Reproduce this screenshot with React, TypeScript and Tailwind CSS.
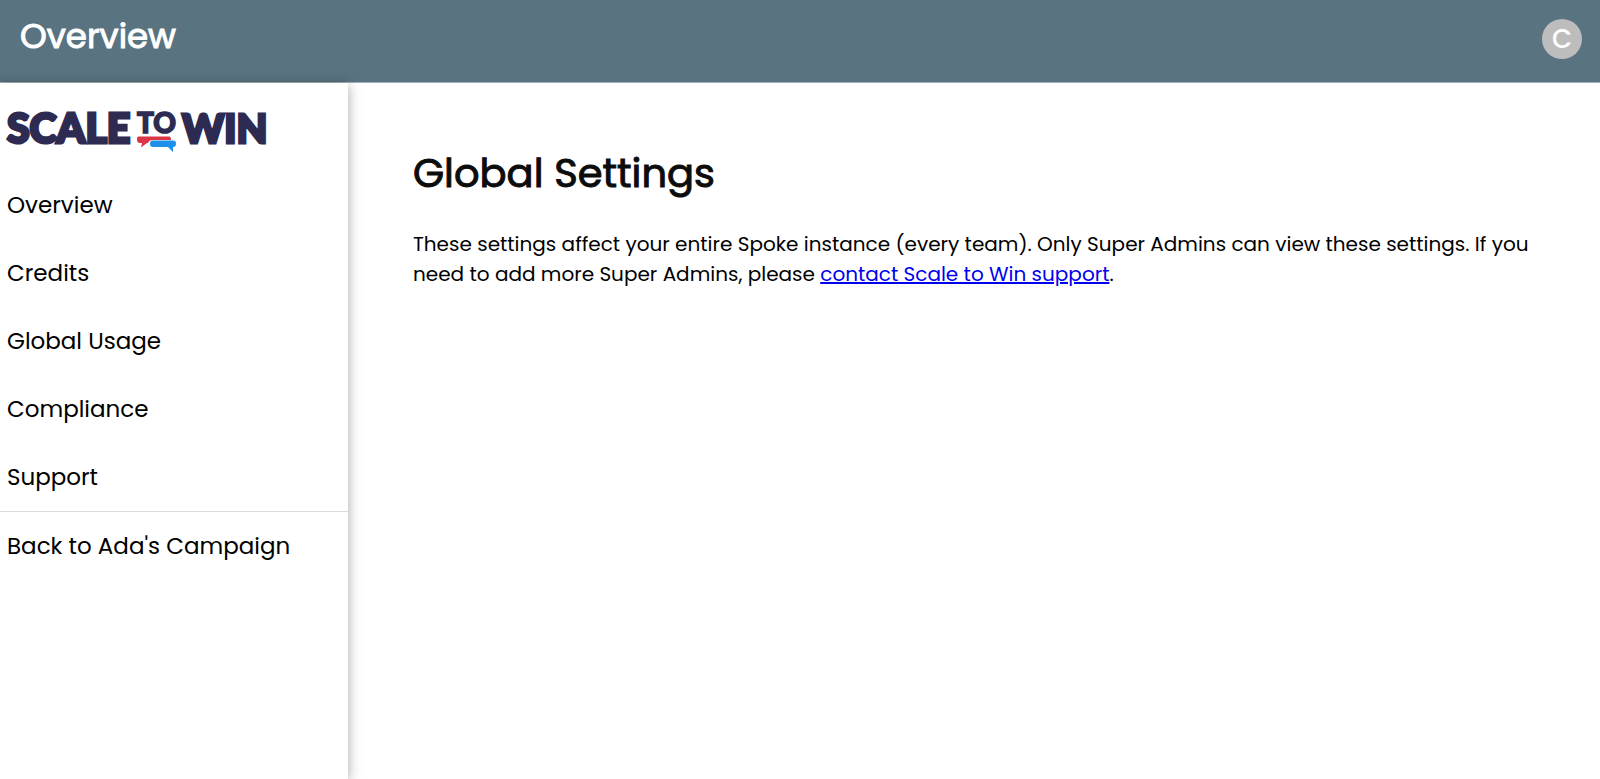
const navItems = [
  { id: 'overview', label: 'Overview' },
  { id: 'credits', label: 'Credits' },
  { id: 'usage', label: 'Global Usage' },
  { id: 'compliance', label: 'Compliance' },
  { id: 'support', label: 'Support' },
]

const navLink = 'flex h-[68px] items-center px-[7px] text-[23px] text-black hover:bg-gray-100'

const Logo = () => (
  <svg
    width="264"
    height="56"
    viewBox="0 0 264 56"
    role="img"
    aria-label="Scale to Win"
    fontFamily="Lato, sans-serif"
    fontWeight="900"
    fill="#2d2b52"
    stroke="#2d2b52"
  >
    <text x="1" y="44" fontSize="41" strokeWidth="3">SCALE</text>
    <text x="131" y="34" fontSize="28" strokeWidth="1.5">TO</text>
    <text x="176" y="44" fontSize="40" strokeWidth="3">WIN</text>
    <path
      d="M133 37.500h30q2 0 2 3.500h-18q-4 0-5 3h-1l-6 4.500 1-4.500h-2q-3 0-3-3.500t2-3z"
      fill="#dc3545"
      stroke="none"
    />
    <path
      d="M147 41.500h20q3 0 3 3.200t-3 3.200v5l-5-5h-15q-3 0-3-3.200t3-3.200z"
      fill="#1e90ea"
      stroke="none"
    />
  </svg>
)

const Header = () => (
  <header className="flex h-[83px] items-start justify-between border-b border-[#a3b3ba] bg-[#597380] pr-[18px] pl-5 text-white">
    <h1 className="pt-3 text-[34px] leading-[48px] [-webkit-text-stroke:1px]">Overview</h1>
    <button
      type="button"
      aria-label="Account menu"
      className="mt-[19px] flex size-10 items-center justify-center rounded-full bg-[#bdbdbd] text-[26px] font-medium"
    >
      C
    </button>
  </header>
)

const Sidebar = () => (
  <aside className="w-[348px] shrink-0 bg-white shadow-[0_2px_12px_rgba(0,0,0,0.35)]">
    <a href="#home" className="flex h-[88px] items-center px-[6px]">
      <Logo />
    </a>
    <nav>
      {navItems.map((item) => (
        <a key={item.id} href={`#${item.id}`} className={navLink}>
          {item.label}
        </a>
      ))}
      <hr className="border-[#dcdcdc]" />
      <a href="#campaign" className={navLink}>
        Back to Ada's Campaign
      </a>
    </nav>
  </aside>
)

const App = () => {
  return (
    <div className="flex min-h-screen flex-col overflow-hidden bg-white font-[Poppins,Inter,sans-serif] text-black">
      <Header />
      <div className="flex flex-1">
        <Sidebar />
        <main className="flex-1 px-[65px] pt-[60px]">
          <h2 className="text-[40px] leading-[60px] text-[#0c0c0c] [-webkit-text-stroke:1px]">
            Global Settings
          </h2>
          <p className="mt-[26px] text-[20px] leading-[30px]">
            These settings affect your entire Spoke instance (every team). Only Super Admins can view
            these settings. If you need to add more Super Admins, please{' '}
            <a href="#contact" className="text-[#0000ee] underline">
              contact Scale to Win support
            </a>
            .
          </p>
        </main>
      </div>
    </div>
  )
}

export default App
